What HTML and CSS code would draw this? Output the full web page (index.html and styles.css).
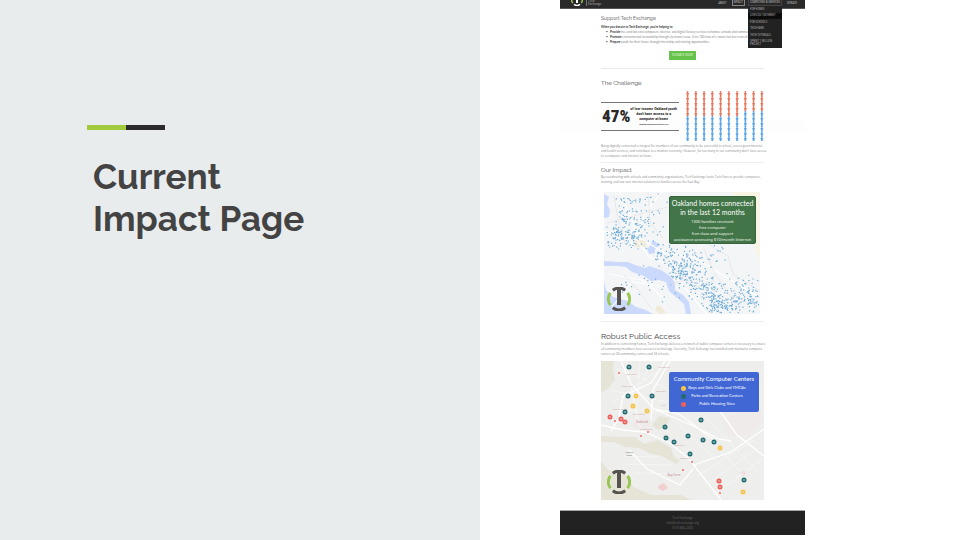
FILE: index.html
```html
<!DOCTYPE html>
<html lang="en">
<head>
<meta charset="utf-8">
<title>Current Impact Page</title>
<link rel="stylesheet" href="styles.css">
</head>
<body>
<svg width="0" height="0" class="defs" aria-hidden="true">
  <symbol id="logo" viewBox="-12 -12 24 24">
    <g fill="none" stroke-width="3">
      <path class="logo-side" d="M-8.6-6.2A10.6 10.6 0 0 0-8.6 6.2M8.6-6.2A10.6 10.6 0 0 1 8.6 6.2"/>
      <path class="logo-core" d="M-6.2-8.8A10.8 10.8 0 0 1 6.2-8.8M-6.2 8.8A10.8 10.8 0 0 0 6.2 8.8"/>
      <path class="logo-core" stroke-width="4" d="M0-10V6"/>
    </g>
  </symbol>
</svg>
<main class="slide">
  <section class="title-panel">
    <div class="accent"></div>
    <h1>Current<br>Impact Page</h1>
  </section>
  <section class="preview">
    <div class="site">
      <header class="site-header">
        <svg class="brand-mark"><use href="#logo"/></svg>
        <span class="brand-name">Tech<br>Exchange</span>
        <nav>
          <a href="#about">ABOUT</a>
          <a href="#impact" class="current">IMPACT</a>
          <div class="drop">
            <a href="#services">COMPUTERS &amp; SERVICES</a>
            <div class="menu">
              <a href="#homes">FOR HOMES</a>
              <a href="#internet" class="active">LOW-COST INTERNET</a>
              <a href="#schools">FOR SCHOOLS</a>
              <a href="#fairs">TECH FAIRS</a>
              <a href="#hub">TECH TUTORIALS</a>
              <a href="#sprint"><span>SPRINT 1 MILLION<br>PROJECT</span></a>
            </div>
          </div>
          <a href="#donate">DONATE</a>
        </nav>
      </header>
      <div class="content">
        <section class="support">
          <h2>Support Tech Exchange</h2>
          <p class="lead">When you donate to Tech Exchange, you're helping to:</p>
          <ul>
            <li><b>Provide</b> free and low cost computers, internet, and digital literacy services to homes, schools and community</li>
            <li><b>Promote</b> environmental stewardship through electronic reuse. Over 700 tons of e-waste has been saved so far</li>
            <li><b>Prepare</b> youth for their future through internship and training opportunities.</li>
          </ul>
          <button type="button">DONATE NOW</button>
        </section>
        <section class="challenge">
          <h2>The Challenge</h2>
          <div class="figures">
            <div class="stat">
              <strong>47%</strong>
              <div class="claim">of low-income Oakland youth<br>don't have access to a<br>computer at home<small>*Oakland Unified School District 2015</small></div>
            </div>
            <svg id="people" viewBox="0 0 78 50" role="img" aria-label="47 of 100 youth"></svg>
          </div>
          <p>Being digitally connected is integral for members of our community to be successful in school, access governmental<br>and health services, and contribute to a modern economy. However, far too many in our community don't have access<br>to a computer and internet at home.</p>
        </section>
        <section class="impact">
          <h2>Our Impact</h2>
          <p>By coordinating with schools and community organizations, Tech Exchange hosts Tech Fairs to provide computers,<br>training, and low cost internet solutions to families across the East Bay.</p>
          <div class="map homes">
            <svg viewBox="0 0 156 122" role="img" aria-label="Map of Oakland homes connected">
              <rect width="156" height="122" fill="#f4f5f6"/>
              <path fill="#f8f4e6" d="M128 0H156V70L148 48 137 30Z"/>
              <path fill="#f0eadb" d="M30 48h12v7h-12zM53 113l5 2 4 6-6 1-5-4z"/>
              <g fill="#cad9fc">
                <path d="M0 2L5 5 3 12 6 18 5 25 0 26Z"/>
                <path d="M49 48l7 5-5 4 0 4-6 1-2-5 3-3z"/>
                <path d="M0 69L14 70 24 70 31 73 41 76 45 74 57 78 66 84 71 91 71 98 79 103 85 110 87 122 82 122 80 112 72 105 65 99 62 90 55 88 47 89 40 84 28 80 22 75 13 74 0 74Z"/>
                <path d="M0 89L2 98 9 105 24 109 32 115 42 118 49 122H0Z"/>
                <path d="M82 61l3 1v4l-3-1z"/>
              </g>
              <g fill="none" stroke="#fff" stroke-width="1.2">
                <path d="M0 39L16 43 30 44 45 65 64 73 78 93 103 122M16 0L27 25 34 45M58 0L41 20 34 45M34 45L61 61 89 65 117 82 156 106M5 82L38 88 61 107M8 115L28 90 62 95"/>
              </g>
              <g fill="none" stroke="#e4e5e8" stroke-width=".8">
                <path d="M3 31L26 25 44 20 64 15M10 4L14 28 21 52M44 0L46 31 59 46M97 48L124 64 129 82 156 99M100 57L111 82 132 112M20 83L34 98 48 117M60 69L88 91M66 93L80 88 92 95 111 88"/>
              </g>
              <g id="home-dots" fill="none" stroke="#6fadd6" stroke-width="1.2"></g>
              <use href="#logo" x="3" y="95" width="24" height="24"/>
            </svg>
            <div class="card green">
              <h3>Oakland homes connected<br>in the last 12 months</h3>
              <p>1300 families received:<br>free computer<br>free class and support<br>assistance accessing $10/month Internet</p>
            </div>
          </div>
        </section>
        <section class="access">
          <h2>Robust Public Access</h2>
          <p>In addition to connecting homes, Tech Exchange believes a network of public computer centers is necessary to ensure<br>all community members have access to technology. Currently, Tech Exchange has installed and maintains computer<br>centers at 28 community centers and 34 schools.</p>
          <div class="map centers">
            <svg viewBox="0 0 163 139" role="img" aria-label="Map of community computer centers">
              <rect width="163" height="139" fill="#eeeeed"/>
              <g fill="#e5e4d7">
                <path d="M0 0H13L12 10 14 18 8 27 0 32Z"/>
                <path d="M0 75L20 76 34 76 43 83 57 79 70 87 73 96 79 100 75 103 61 95 48 92 38 87 24 86 13 81 0 81Z"/>
                <path d="M0 100L7 109 24 113 32 126 51 134 80 134 91 139H0Z"/>
                <path d="M51 64L58 55 69 57 64 66 57 69Z"/>
              </g>
              <path fill="#f0ebeb" d="M120 58l12-4 22-12 9 15-14 16-20 1zM32 57h17v12H32z"/>
              <path fill="#f0cfcf" d="M58 124l5-2 4 5-5 3-5-3zM139 111l6-1-2 5z"/>
              <g fill="none" stroke="#fff" stroke-width="1.3">
                <path d="M10 70L18 57 22 35 50 22 64 0M0 64L22 69 44 71 69 82 88 98 120 139M20 0L30 23 53 48 78 53 112 78 M69 0L52 29 50 59M119 50L136 74 163 95M93 104L130 91 163 68M28 89L46 108 79 124 92 108M53 48L90 64 118 78 130 80"/>
              </g>
              <g fill="none" stroke="#fafafa" stroke-width=".6">
                <path d="M16 8L66 27M9 29L66 41M14 49L67 51M25 0L39 66M39 0L35 59M51 0L24 58M11 42L53 12M74 60L126 110M85 55L145 116M101 52L158 112M96 115L153 79M104 124L158 87M112 134L163 97M20 95L59 96M25 103L71 104M33 112L82 113"/>
              </g>
              <g class="place" text-anchor="middle">
                <text x="30" y="14">PIEDMONT</text><text x="63" y="7">MONTCLAIR</text><text x="26" y="26">EMERYVILLE</text><text x="60" y="31">GLENVIEW</text>
                <text x="41" y="62" class="city">Oakland</text><text x="28" y="92" class="dark">Alameda</text><text x="28" y="95" class="dark">Island</text><text x="73" y="115" class="city">Bay Farm</text>
                <text x="45" y="69">JINGLETOWN</text><text x="78" y="85">FRUITVALE</text><text x="84" y="98">COLISEUM</text><text x="19" y="49">WEST OAKLAND</text><text x="38" y="54">DOWNTOWN</text><text x="62" y="45">LAKE</text>
              </g>
              <g id="center-pins"></g>
              <use href="#logo" x="6" y="109" width="24" height="24"/>
            </svg>
            <div class="card blue">
              <h3>Community Computer Centers</h3>
              <ul>
                <li class="yellow">Boys and Girls Clubs and YMCAs</li>
                <li class="teal">Parks and Recreation Centers</li>
                <li class="red">Public Housing Sites</li>
              </ul>
            </div>
          </div>
        </section>
      </div>
      <footer>Tech Exchange<br>info@techexchange.org<br>(510) 866-2260</footer>
    </div>
  </section>
</main>
<script src="figures.js"></script>
</body>
</html>
```
FILE: styles.css
```css
* { box-sizing: border-box; margin: 0; padding: 0; }
body { background: #fff; font-family: "Open Sans", "Noto Sans", sans-serif; }
a { color: inherit; text-decoration: none; }
.defs { position: absolute; }
.slide { display: grid; grid-template-columns: repeat(2, minmax(0, 1fr)); min-height: 100vh; }

.title-panel { background: #e8eced; padding: 125px 87px 0; }
.accent { width: 78px; height: 5px; background: linear-gradient(90deg, #a2ca3d 50%, #2b2b2b 50%); }
h1 { margin: 26px 0 0 6px; font: 700 35px/42px Raleway, Lato, sans-serif; color: #434343; white-space: nowrap; }

.preview { display: grid; grid-template-columns: 80fr minmax(0, 245fr) 155fr; align-items: start; }
.site { grid-column: 2; font-size: 3px; line-height: 5px; color: #888; white-space: nowrap; background: linear-gradient(#fff 120px, #fdfdfd 121px, #fdfdfd 130px, #fff 132px); }
.logo-side { stroke: #98c653; }
.logo-core { stroke: var(--core, #55524f); }

.site-header { --core: #fff; display: flex; align-items: flex-end; height: 9px; padding: 0 8px 2px 11px; background: #292929; border-bottom: 1px solid #555; color: #bbb; }
.brand-mark { width: 12px; height: 12px; }
.brand-name { margin-left: 3px; padding-left: 1px; border-left: 1px solid #777; line-height: 3px; }
nav { display: flex; align-items: center; gap: 5px; margin-left: auto; font-family: "Liberation Sans Narrow", "Roboto Condensed", sans-serif; line-height: 5px; }
.current { padding: 0 1px; border: 1px solid #888; border-top: 0; }
.drop { position: relative; width: 34px; margin-left: -2px; text-align: center; border: 1px solid #444; border-top: 0; }
.menu { position: absolute; z-index: 2; top: 6px; left: -1px; display: flex; flex-direction: column; width: 34px; height: 42px; background: #222; text-align: left; }
.menu a { display: flex; flex: 1 1 auto; align-items: center; padding: 1px 2px; line-height: 3px; color: #aaa; }
.menu .active { background: #0c0c0c; }

.content { padding: 0 41px; }
h2 { font: 400 6px/8px Raleway, Lato, sans-serif; color: #444; }
.support { height: 60px; padding-top: 5px; border-bottom: 1px solid #e9e9e9; font-family: Lato, sans-serif; }
.support h2 { font-size: 5px; }
.lead { margin-top: 3px; font-weight: 700; color: #333; }
.support ul { padding-left: 9px; list-style: none; }
.support b { color: #333; }
.support li::before { content: "•"; display: inline-block; width: 4px; margin-left: -4px; color: #333; }
button { display: block; width: 27px; height: 9px; margin: 6px auto 0; border: 0; background: #66c24b; color: #e2f6dc; font: 3px/9px Lato, sans-serif; }

.challenge { height: 94px; padding-top: 10px; border-bottom: 1px solid #eee; }
.figures { display: flex; justify-content: space-between; align-items: center; margin: 4px 0 3px; }
.stat { display: flex; align-items: center; justify-content: space-between; width: 78px; height: 29px; border: solid #777; border-width: 1px 0; color: #292929; font-family: "Liberation Sans Narrow", "Roboto Condensed", sans-serif; font-weight: 700; }
.stat strong { padding-left: 1px; font-size: 17px; }
.claim { padding-right: 2px; font-size: 4px; line-height: 5px; text-align: center; }
.claim small { display: block; margin-top: 1px; font-size: 2px; font-style: italic; }
#people { width: 78px; height: 50px; }
.red { --pin: #ed5e58; }
.teal { --pin: #216b70; }
.yellow { --pin: #f7c443; }

.impact { height: 159px; padding-top: 3px; border-bottom: 1px solid #eee; }
.impact p { margin-top: 1px; }
.map { position: relative; }
.map > svg { display: block; width: 100%; }
.homes { margin: 7px 4px 0 3px; }
.card { position: absolute; color: #fff; text-align: center; font-family: Lato, "Noto Sans", sans-serif; border-radius: 2px; }
.card h3 { font-weight: 400; }
.homes .green { top: 4px; right: 4px; width: 87px; height: 48px; padding-top: 2px; background: #427547; border: 1px solid #37623b; }
.green h3 { font-size: 7px; line-height: 9px; }
.homes .green p { margin-top: 2px; font: 4px/6px "Noto Sans", sans-serif; color: #f2f8f2; }

.access { padding-top: 9px; }
.access h2 { font-size: 8px; line-height: 11px; }
.access p { margin-bottom: 4px; }
.place { font: 2px "Open Sans", sans-serif; fill: #c59393; }
.place .city { font-size: 3px; fill: #b98080; }
.place .dark { fill: #666; }
#center-pins circle { fill: var(--pin); }
#center-pins .glyph { fill: #d8e8e8; }
.blue { top: 11px; right: 5px; width: 90px; height: 40px; padding-top: 2px; background: #4167d5; }
.blue h3 { font-size: 6px; line-height: 10px; }
.blue ul { padding-left: 6px; list-style: none; font-size: 4px; line-height: 8px; }
.blue li { position: relative; }
.blue li::before { content: ""; position: absolute; left: 6px; top: 2px; width: 5px; height: 5px; border-radius: 50%; background: var(--pin); }

footer { height: 25px; margin-top: 10px; padding-top: 5px; border-top: 1px solid #a4aaaa; background: #222; color: #6b6b6b; text-align: center; }
```
FILE: figures.js
```js
// One hundred people, ten per column; 47 of them are highlighted.
const people = document.getElementById('people');
let figures = '';
for (let c = 0; c < 10; c++) {
  for (let r = 0; r < 10; r++) {
    const x = 1.6 + c * 8.25;
    const y = 1 + r * 5;
    const color = r < (c < 7 ? 5 : 4) ? '#e8765b' : '#5ba6e8';
    figures += `<g fill="${color}"><circle cx="${x}" cy="${y}" r=".9"/><path d="M${x - 1.3} ${y + 1}h2.6v1.2l-.5 .6v1.6h-1.6v-1.6l-.5-.6z"/></g>`;
  }
}
people.innerHTML = figures;

// Connected homes: clusters of [x, y, spreadX, spreadY, count].
let seed = 11;
const rand = () => (seed = (seed * 16807) % 2147483647) / 2147483647;
const spread = () => rand() + rand() - 1;
const clusters = [
  [10, 44, 14, 14, 50], [24, 47, 18, 12, 50], [20, 26, 20, 26, 65],
  [42, 34, 20, 32, 40], [62, 63, 14, 12, 40], [78, 80, 16, 16, 85],
  [88, 72, 28, 28, 75], [98, 96, 16, 14, 60], [112, 106, 18, 18, 70],
  [120, 114, 26, 12, 80], [136, 102, 22, 22, 80], [146, 110, 14, 14, 35],
  [45, 92, 44, 26, 22], [110, 65, 44, 22, 18], [44, 9, 22, 10, 12]
];
let dots = '';
for (const [x, y, sx, sy, n] of clusters) {
  for (let i = 0; i < n; i++) {
    const px = x + spread() * sx;
    const py = y + spread() * sy;
    if (px > 1 && px < 154 && py > 1 && py < 121) dots += `M${px.toFixed(1)} ${py.toFixed(1)}h1.2`;
  }
}
document.getElementById('home-dots').innerHTML = `<path d="${dots}"/>`;

const pins = {
  teal: [[28, 6], [48, 6], [27, 35], [51, 35], [24, 51], [64, 66], [65, 77], [73, 81], [87, 75], [102, 79], [100, 59], [113, 81], [89, 93], [143, 119]],
  yellow: [[35, 35], [32, 45], [46, 50], [119, 87], [142, 131]],
  red: [[9, 56], [20, 58], [24, 61], [118, 120], [119, 126]]
};
let marks = '';
for (const [kind, spots] of Object.entries(pins)) {
  for (const [x, y] of spots) {
    marks += `<g class="${kind}"><circle cx="${x}" cy="${y}" r="2.5"/><path class="glyph" d="M${x - 1.2} ${y - .6}h2.4v1.2h-2.4z" opacity=".65"/></g>`;
  }
}
for (const [x, y] of [[18, 12], [14, 60], [40, 75], [47, 71], [91, 101], [119, 132], [82, 109]]) {
  marks += `<g class="red"><circle cx="${x}" cy="${y}" r=".9"/></g>`;
}
document.getElementById('center-pins').innerHTML = marks;
```
